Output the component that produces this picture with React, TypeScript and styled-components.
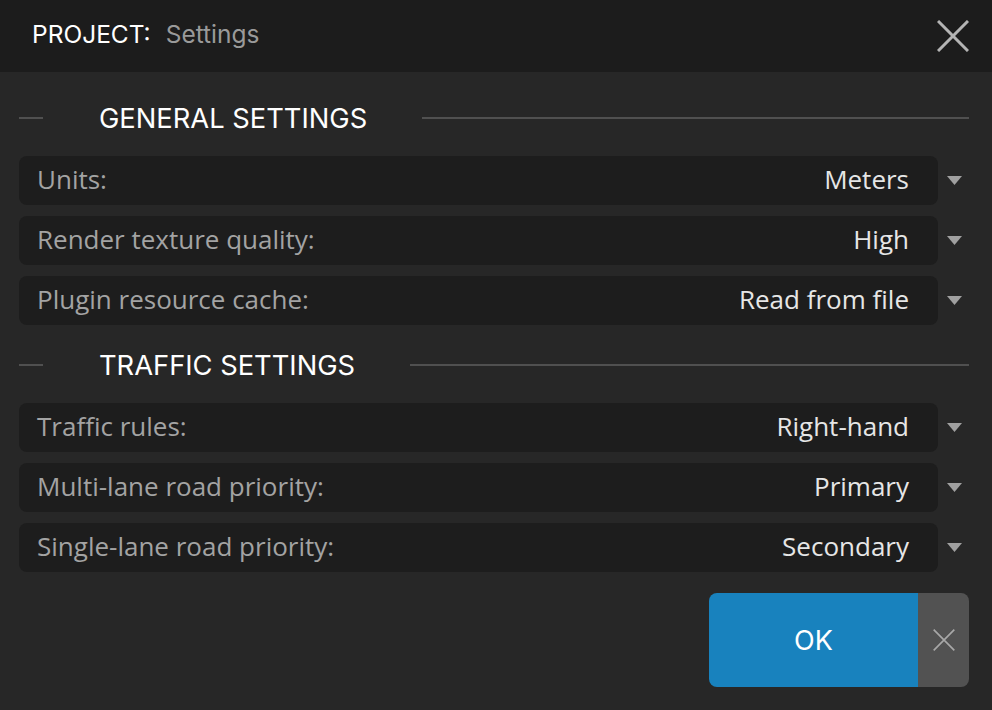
import React from 'react';
import styled, { createGlobalStyle } from 'styled-components';

const GlobalStyle = createGlobalStyle`
  html, body {
    margin: 0;
    padding: 0;
    background: #272727;
  }
  * {
    box-sizing: border-box;
  }
`;

const Dialog = styled.div`
  width: 992px;
  height: 710px;
  background: #272727;
  display: flex;
  flex-direction: column;
  overflow: hidden;
`;

const TitleBar = styled.div`
  height: 72px;
  background: #1c1c1c;
  display: flex;
  align-items: center;
  padding: 0 22px 5px 32px;
  font-family: Inter, "Noto Sans", sans-serif;
  font-size: 24.5px;
`;

const TitleKey = styled.span`
  color: #ffffff;
  margin-right: 15px;
`;

const TitleValue = styled.span`
  color: #9a9a9a;
  flex: 1;
`;

const CloseButton = styled.button`
  width: 34px;
  height: 34px;
  padding: 0;
  margin-top: 5px;
  border: none;
  background: transparent;
  display: flex;
  align-items: center;
  justify-content: center;
  cursor: pointer;
`;

const Body = styled.div`
  display: flex;
  flex-direction: column;
  padding: 16px 23px 0 19px;
`;

const SectionHeading = styled.div<{ $first?: boolean }>`
  height: 60px;
  display: flex;
  align-items: center;
  margin-top: ${(p) => (p.$first ? '0' : '10px')};
  margin-bottom: 8px;
`;

const Dash = styled.div`
  width: 24px;
  height: 2px;
  background: #505050;
`;

const HeadingText = styled.h2`
  margin: 0 55px 0 56px;
  font-family: Inter, "Noto Sans", sans-serif;
  font-weight: 400;
  font-size: 27.3px;
  color: #ffffff;
  white-space: nowrap;
`;

const Rule = styled.div`
  flex: 1;
  height: 2px;
  background: #505050;
`;

const RowList = styled.div`
  display: flex;
  flex-direction: column;
  gap: 11px;
`;

const Row = styled.div`
  display: flex;
  align-items: center;
  height: 49px;
`;

const Field = styled.div`
  flex: 1;
  height: 100%;
  background: #1d1d1d;
  border-radius: 8px;
  display: flex;
  align-items: center;
  justify-content: space-between;
  padding: 0 29px 4px 18px;
  font-family: "Open Sans", "Noto Sans", sans-serif;
  font-size: 26px;
`;

const Label = styled.span`
  color: #a3a3a3;
`;

const Value = styled.span`
  color: #e6e6e6;
`;

const Caret = styled.div`
  width: 31px;
  display: flex;
  justify-content: center;
  align-items: center;
  padding-left: 1px;
`;

const Footer = styled.div`
  display: flex;
  justify-content: flex-end;
  padding: 21px 23px 0 0;
`;

const ButtonGroup = styled.div`
  display: flex;
  height: 94px;
  border-radius: 8px;
  overflow: hidden;
`;

const OkButton = styled.button`
  width: 209px;
  border: none;
  background: #1882be;
  color: #ffffff;
  font-family: Inter, "Noto Sans", sans-serif;
  font-size: 27px;
  cursor: pointer;
`;

const CancelButton = styled.button`
  width: 51px;
  border: none;
  background: #525252;
  display: flex;
  align-items: center;
  justify-content: center;
  padding: 0;
  cursor: pointer;
`;

type Setting = { label: string; value: string };

const general: Setting[] = [
  { label: 'Units:', value: 'Meters' },
  { label: 'Render texture quality:', value: 'High' },
  { label: 'Plugin resource cache:', value: 'Read from file' },
];

const traffic: Setting[] = [
  { label: 'Traffic rules:', value: 'Right-hand' },
  { label: 'Multi-lane road priority:', value: 'Primary' },
  { label: 'Single-lane road priority:', value: 'Secondary' },
];

const Cross = ({ size, color, width }: { size: number; color: string; width: number }) => (
  <svg width={size} height={size} viewBox="0 0 32 32">
    <path d="M1 1 L31 31 M31 1 L1 31" stroke={color} strokeWidth={width} fill="none" />
  </svg>
);

const SettingRows = ({ items }: { items: Setting[] }) => (
  <RowList>
    {items.map((s) => (
      <Row key={s.label}>
        <Field>
          <Label>{s.label}</Label>
          <Value>{s.value}</Value>
        </Field>
        <Caret>
          <svg width="15" height="9" viewBox="0 0 15 9">
            <path d="M0 0 H15 L7.5 9 Z" fill="#a0a0a0" />
          </svg>
        </Caret>
      </Row>
    ))}
  </RowList>
);

const App = () => {
  return (
    <>
      <GlobalStyle />
      <Dialog>
        <TitleBar>
          <TitleKey>PROJECT:</TitleKey>
          <TitleValue>Settings</TitleValue>
          <CloseButton aria-label="Close">
            <Cross size={32} color="#b4b4b4" width={3} />
          </CloseButton>
        </TitleBar>
        <Body>
          <SectionHeading $first>
            <Dash />
            <HeadingText>GENERAL SETTINGS</HeadingText>
            <Rule />
          </SectionHeading>
          <SettingRows items={general} />
          <SectionHeading>
            <Dash />
            <HeadingText>TRAFFIC SETTINGS</HeadingText>
            <Rule />
          </SectionHeading>
          <SettingRows items={traffic} />
        </Body>
        <Footer>
          <ButtonGroup>
            <OkButton>OK</OkButton>
            <CancelButton aria-label="Cancel">
              <Cross size={22} color="#a8a8a8" width={2.4} />
            </CancelButton>
          </ButtonGroup>
        </Footer>
      </Dialog>
    </>
  );
};

export default App;
